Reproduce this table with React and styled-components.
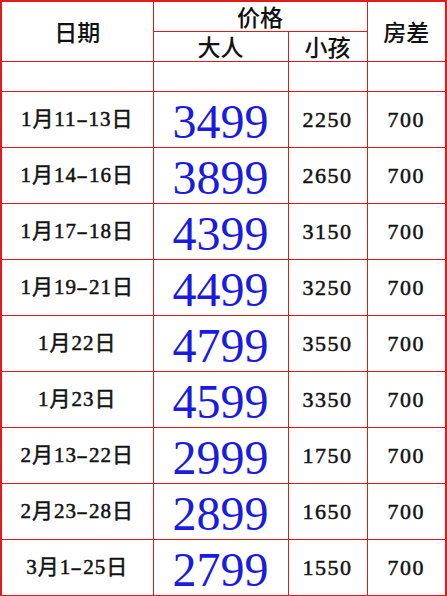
import React from "react";
import styled, { createGlobalStyle } from "styled-components";

const rows = [
  { date: "1月11-13日", adult: "3499", child: "2250", room: "700" },
  { date: "1月14-16日", adult: "3899", child: "2650", room: "700" },
  { date: "1月17-18日", adult: "4399", child: "3150", room: "700" },
  { date: "1月19-21日", adult: "4499", child: "3250", room: "700" },
  { date: "1月22日", adult: "4799", child: "3550", room: "700" },
  { date: "1月23日", adult: "4599", child: "3350", room: "700" },
  { date: "2月13-22日", adult: "2999", child: "1750", room: "700" },
  { date: "2月23-28日", adult: "2899", child: "1650", room: "700" },
  { date: "3月1-25日", adult: "2799", child: "1550", room: "700" },
];

const GlobalStyle = createGlobalStyle`
  body {
    margin: 0;
    background: #fff;
  }
`;

const Table = styled.table`
  width: 446px;
  table-layout: fixed;
  border-collapse: collapse;
  border: 2px solid #e21a1a;
  font-family: "Liberation Serif", "Noto Sans CJK SC", serif;
  color: #111;
`;

const Head = styled.th`
  border: 1px solid #e21a1a;
  height: ${(p) => p.h || 29}px;
  padding: 0;
  font-family: "Noto Sans CJK SC", sans-serif;
  font-weight: 500;
  font-size: 23px;
  line-height: 1;
  text-align: center;
  vertical-align: middle;
`;

const Cell = styled.td`
  border: 1px solid #e21a1a;
  height: ${(p) => p.h || 55}px;
  padding: 0;
  text-align: center;
  vertical-align: middle;
  line-height: 1;
`;

const DateText = styled.span`
  font-size: 21px;
  font-weight: 400;
  letter-spacing: 1px;
  -webkit-text-stroke: 0.5px #111;
`;

const Dash = styled.span`
  display: inline-block;
  transform: scaleX(1.6);
  margin: 0 2px;
`;

const Adult = styled.span`
  font-size: 48px;
  color: #1a1ae0;
  display: inline-block;
  padding-top: 4px;
`;

const Small = styled.span`
  font-size: 22px;
  letter-spacing: 1.5px;
  -webkit-text-stroke: 0.5px #111;
`;

const renderDate = (d) => {
  const parts = d.split("-");
  if (parts.length === 1) return d;
  return (
    <>
      {parts[0]}
      <Dash>-</Dash>
      {parts[1]}
    </>
  );
};

export default function App() {
  return (
    <>
      <GlobalStyle />
      <Table>
        <colgroup>
          <col style={{ width: 152 }} />
          <col style={{ width: 135 }} />
          <col style={{ width: 79 }} />
          <col style={{ width: 79 }} />
        </colgroup>
        <thead>
          <tr>
            <Head rowSpan={2}>日期</Head>
            <Head colSpan={2}>价格</Head>
            <Head rowSpan={2}>房差</Head>
          </tr>
          <tr>
            <Head>大人</Head>
            <Head>小孩</Head>
          </tr>
        </thead>
        <tbody>
          <tr>
            <Cell h={29} />
            <Cell h={29} />
            <Cell h={29} />
            <Cell h={29} />
          </tr>
          {rows.map((r) => (
            <tr key={r.date}>
              <Cell>
                <DateText>{renderDate(r.date)}</DateText>
              </Cell>
              <Cell>
                <Adult>{r.adult}</Adult>
              </Cell>
              <Cell>
                <Small>{r.child}</Small>
              </Cell>
              <Cell>
                <Small>{r.room}</Small>
              </Cell>
            </tr>
          ))}
        </tbody>
      </Table>
    </>
  );
}
